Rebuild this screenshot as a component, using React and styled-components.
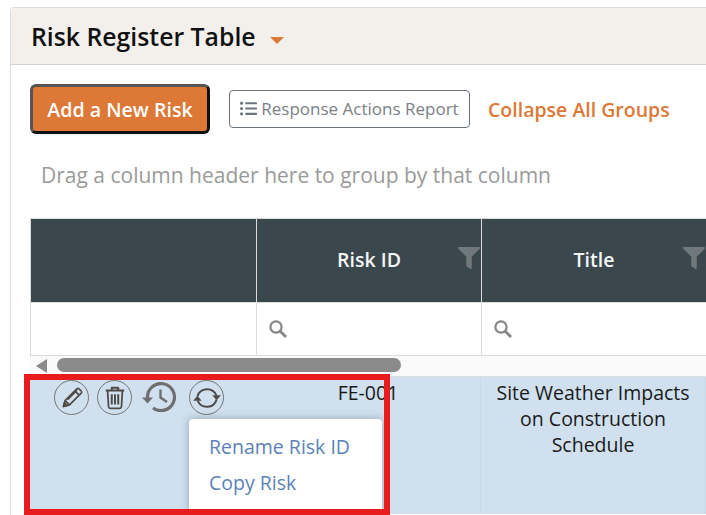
import React from 'react';
import styled, { createGlobalStyle } from 'styled-components';
import { FaFilter, FaListUl } from 'react-icons/fa';

const Global = createGlobalStyle`
  html, body { margin: 0; padding: 0; background: #fff; }
  body { font-family: "Open Sans", "Liberation Sans", sans-serif; }
`;

const Page = styled.div`
  position: relative;
  width: 706px;
  height: 515px;
  overflow: hidden;
  padding: 7px 0 0 10px;
  box-sizing: border-box;
`;

const Panel = styled.div`
  border: 1px solid #dcdcdc;
  border-right: none;
  border-bottom: none;
  border-top-left-radius: 4px;
  height: 520px;
  box-sizing: border-box;
`;

const PanelHeader = styled.div`
  display: flex;
  align-items: center;
  height: 57px;
  padding: 0 0 0 20px;
  box-sizing: border-box;
  background: #f3f0ec;
  border-bottom: 1px solid #d6d3cf;
`;

const PanelTitle = styled.h2`
  margin: 0 14px 0 0;
  font-size: 24.8px;
  font-weight: 600;
  color: #111;
  line-height: 1;
`;

const Caret = styled.span`
  width: 0;
  height: 0;
  margin-top: 9px;
  border-left: 7.5px solid transparent;
  border-right: 7.5px solid transparent;
  border-top: 7px solid #dd7836;
`;

const Toolbar = styled.div`
  display: flex;
  align-items: center;
  gap: 19px;
  padding: 19px 0 0 19px;
`;

const PrimaryButton = styled.button`
  width: 180px;
  height: 50px;
  box-sizing: border-box;
  background: #dd7836;
  color: #fff;
  border: 3px solid #555;
  border-bottom-color: #111;
  border-right-color: #111;
  border-radius: 6px;
  font: 600 19.6px "Open Sans", sans-serif;
  padding: 0;
`;

const OutlineButton = styled.button`
  display: flex;
  align-items: center;
  justify-content: center;
  gap: 4px;
  width: 241px;
  height: 38px;
  box-sizing: border-box;
  background: #fff;
  color: #7a8087;
  border: 1px solid #6c757d;
  border-radius: 4px;
  font: 400 17px "Open Sans", sans-serif;
  line-height: 36px;
  padding: 0 0 1px;
`;

const CollapseLink = styled.a`
  color: #dd7836;
  font-size: 19.5px;
  font-weight: 600;
  margin-left: -1px;
`;

const GroupHint = styled.div`
  margin: 26px 0 0 30px;
  height: 30px;
  line-height: 30px;
  font-size: 21px;
  color: #9a9a9a;
`;

const Grid = styled.div`
  margin: 28px 0 0 19px;
  border-top: 1px solid #dcdcdc;
  border-left: 1px solid #dcdcdc;
`;

const Columns = styled.div`
  display: grid;
  grid-template-columns: 226px 225px 225px;
`;

const HeadCell = styled.div`
  position: relative;
  display: flex;
  align-items: center;
  justify-content: center;
  height: 84px;
  padding-bottom: 2px;
  box-sizing: border-box;
  background: #3a474d;
  color: #f4f5f5;
  font-size: 19.5px;
  font-weight: 600;
  border-right: 1px solid #dcdcdc;
  border-bottom: 1px solid #dcdcdc;
`;

const FilterIcon = styled(FaFilter)`
  position: absolute;
  right: 1px;
  top: 28px;
  width: 22px;
  height: 22px;
  color: #70787b;
`;

const FilterCell = styled.div`
  display: flex;
  align-items: center;
  height: 53px;
  padding-left: 11px;
  box-sizing: border-box;
  border-right: 1px solid #dcdcdc;
  border-bottom: 1px solid #dcdcdc;
`;

const ScrollBar = styled.div`
  display: flex;
  align-items: center;
  height: 20px;
  margin-left: -1px;
  background: #fafafa;
  padding-left: 6px;
`;

const ScrollArrow = styled.span`
  width: 0;
  height: 0;
  border-top: 7px solid transparent;
  border-bottom: 7px solid transparent;
  border-right: 11px solid #8b8b8b;
`;

const ScrollThumb = styled.div`
  width: 344px;
  height: 14px;
  margin: 0 0 2px 10px;
  border-radius: 7px;
  background: #8b8b8b;
`;

const Row = styled.div`
  display: grid;
  grid-template-columns: 226px 225px 225px;
  margin-left: -1px;
  height: 137px;
  background: #d0e0ee;
  border-top: 1px solid #dbe0e4;
`;

const BodyCell = styled.div`
  padding: 3px 10px 0;
  text-align: center;
  font-size: 19.5px;
  line-height: 26px;
  color: #1a1a1a;
  border-right: 1px solid #c8d8e4;
`;

const Actions = styled.div`
  display: flex;
  align-items: flex-start;
  gap: 8px;
  padding: 3px 0 0 24px;
`;

const RoundIcon = styled.span`
  display: flex;
  align-items: center;
  justify-content: center;
  width: 35px;
  height: 35px;
  box-sizing: border-box;
  border: 1.5px solid #757575;
  border-radius: 50%;
`;

const HistorySvg = styled.svg`
  margin: 2px 4px 0 1px;
`;

const Menu = styled.ul`
  position: absolute;
  left: 189px;
  top: 419px;
  width: 193px;
  height: 96px;
  margin: 0;
  padding: 10px 0 0 20px;
  box-sizing: border-box;
  list-style: none;
  background: #fff;
  border-radius: 4px;
  box-shadow: 0 0 8px rgba(70, 90, 110, 0.45);
`;

const MenuItem = styled.li`
  height: 36px;
  line-height: 36px;
  font-size: 19.5px;
  color: #5b82b8;
`;

const Highlight = styled.div`
  position: absolute;
  left: 24px;
  top: 374px;
  width: 366px;
  height: 141px;
  box-sizing: border-box;
  border: 6px solid #e81c1c;
  pointer-events: none;
`;

const SearchIcon = () => (
  <svg width="20" height="20" viewBox="0 0 20 20" fill="none" stroke="#858585" strokeWidth="2.2">
    <circle cx="8" cy="8" r="5.6" />
    <path d="M12 12l6 6" strokeWidth="2.8" />
  </svg>
);

const PencilIcon = () => (
  <svg width="24" height="24" viewBox="0 0 24 24" fill="none" stroke="#4f4a46" strokeWidth="1.7" strokeLinejoin="round">
    <path d="M3.5 20.5l1.6-6L16.8 2.8a1.6 1.6 0 0 1 2.2 0l2.2 2.2a1.6 1.6 0 0 1 0 2.2L9.5 18.9z" />
    <path d="M5.1 14.5l4.4 4.4M14.8 4.8l4.4 4.4M7.6 13.6L17 4.2" />
    <path d="M3.5 20.5l1-3.8 2.8 2.8z" fill="#4f4a46" />
  </svg>
);

const TrashIcon = () => (
  <svg width="24" height="25" viewBox="0 0 26 27" fill="none" stroke="#4f4a46" strokeWidth="1.9" strokeLinejoin="round">
    <path d="M3 6h20M9.5 5.5V3h7v2.5" strokeWidth="2.2" />
    <path d="M5 6.5l1 17a2 2 0 0 0 2 1.8h10a2 2 0 0 0 2-1.8l1-17" />
    <path d="M9.5 10v11M13 10v11M16.5 10v11" strokeWidth="2.1" />
  </svg>
);

const HistoryIcon = () => (
  <HistorySvg width="36" height="30" viewBox="0 0 36 30" fill="none" stroke="#6f6f6f" strokeWidth="3.2">
    <path d="M6.5 16A13.5 13.5 0 1 1 12 26" />
    <path d="M1 15.5h11l-5.5 6z" fill="#6f6f6f" stroke="none" />
    <path d="M19.5 7.5v8l6.5 4.5" strokeWidth="2.4" />
  </HistorySvg>
);

const SyncIcon = () => (
  <svg width="32" height="32" viewBox="0 0 30 30" fill="none" stroke="#4f4a46" strokeWidth="1.8">
    <path d="M6 13.5A9.5 9.5 0 0 1 23.8 12.5" />
    <path d="M24 16.5A9.5 9.5 0 0 1 6.2 17.5" />
    <path d="M20 12.500h8l-4 4.500zM10 17.500H2l4-4.500z" fill="#4f4a46" stroke="none" />
  </svg>
);

export default function App() {
  return (
    <Page>
      <Global />
      <Panel>
        <PanelHeader>
          <PanelTitle>Risk Register Table</PanelTitle>
          <Caret />
        </PanelHeader>
        <Toolbar>
          <PrimaryButton>Add a New Risk</PrimaryButton>
          <OutlineButton>
            <FaListUl size={17} color="#6c757d" />
            Response Actions Report
          </OutlineButton>
          <CollapseLink>Collapse All Groups</CollapseLink>
        </Toolbar>
        <GroupHint>Drag a column header here to group by that column</GroupHint>
        <Grid>
          <Columns>
            <HeadCell />
            <HeadCell>Risk ID<FilterIcon /></HeadCell>
            <HeadCell>Title<FilterIcon /></HeadCell>
            <FilterCell />
            <FilterCell><SearchIcon /></FilterCell>
            <FilterCell><SearchIcon /></FilterCell>
          </Columns>
          <ScrollBar>
            <ScrollArrow />
            <ScrollThumb />
          </ScrollBar>
          <Row>
            <Actions>
              <RoundIcon><PencilIcon /></RoundIcon>
              <RoundIcon><TrashIcon /></RoundIcon>
              <HistoryIcon />
              <RoundIcon><SyncIcon /></RoundIcon>
            </Actions>
            <BodyCell>FE-001</BodyCell>
            <BodyCell>Site Weather Impacts on Construction Schedule</BodyCell>
          </Row>
        </Grid>
      </Panel>
      <Menu>
        <MenuItem>Rename Risk ID</MenuItem>
        <MenuItem>Copy Risk</MenuItem>
      </Menu>
      <Highlight />
    </Page>
  );
}
